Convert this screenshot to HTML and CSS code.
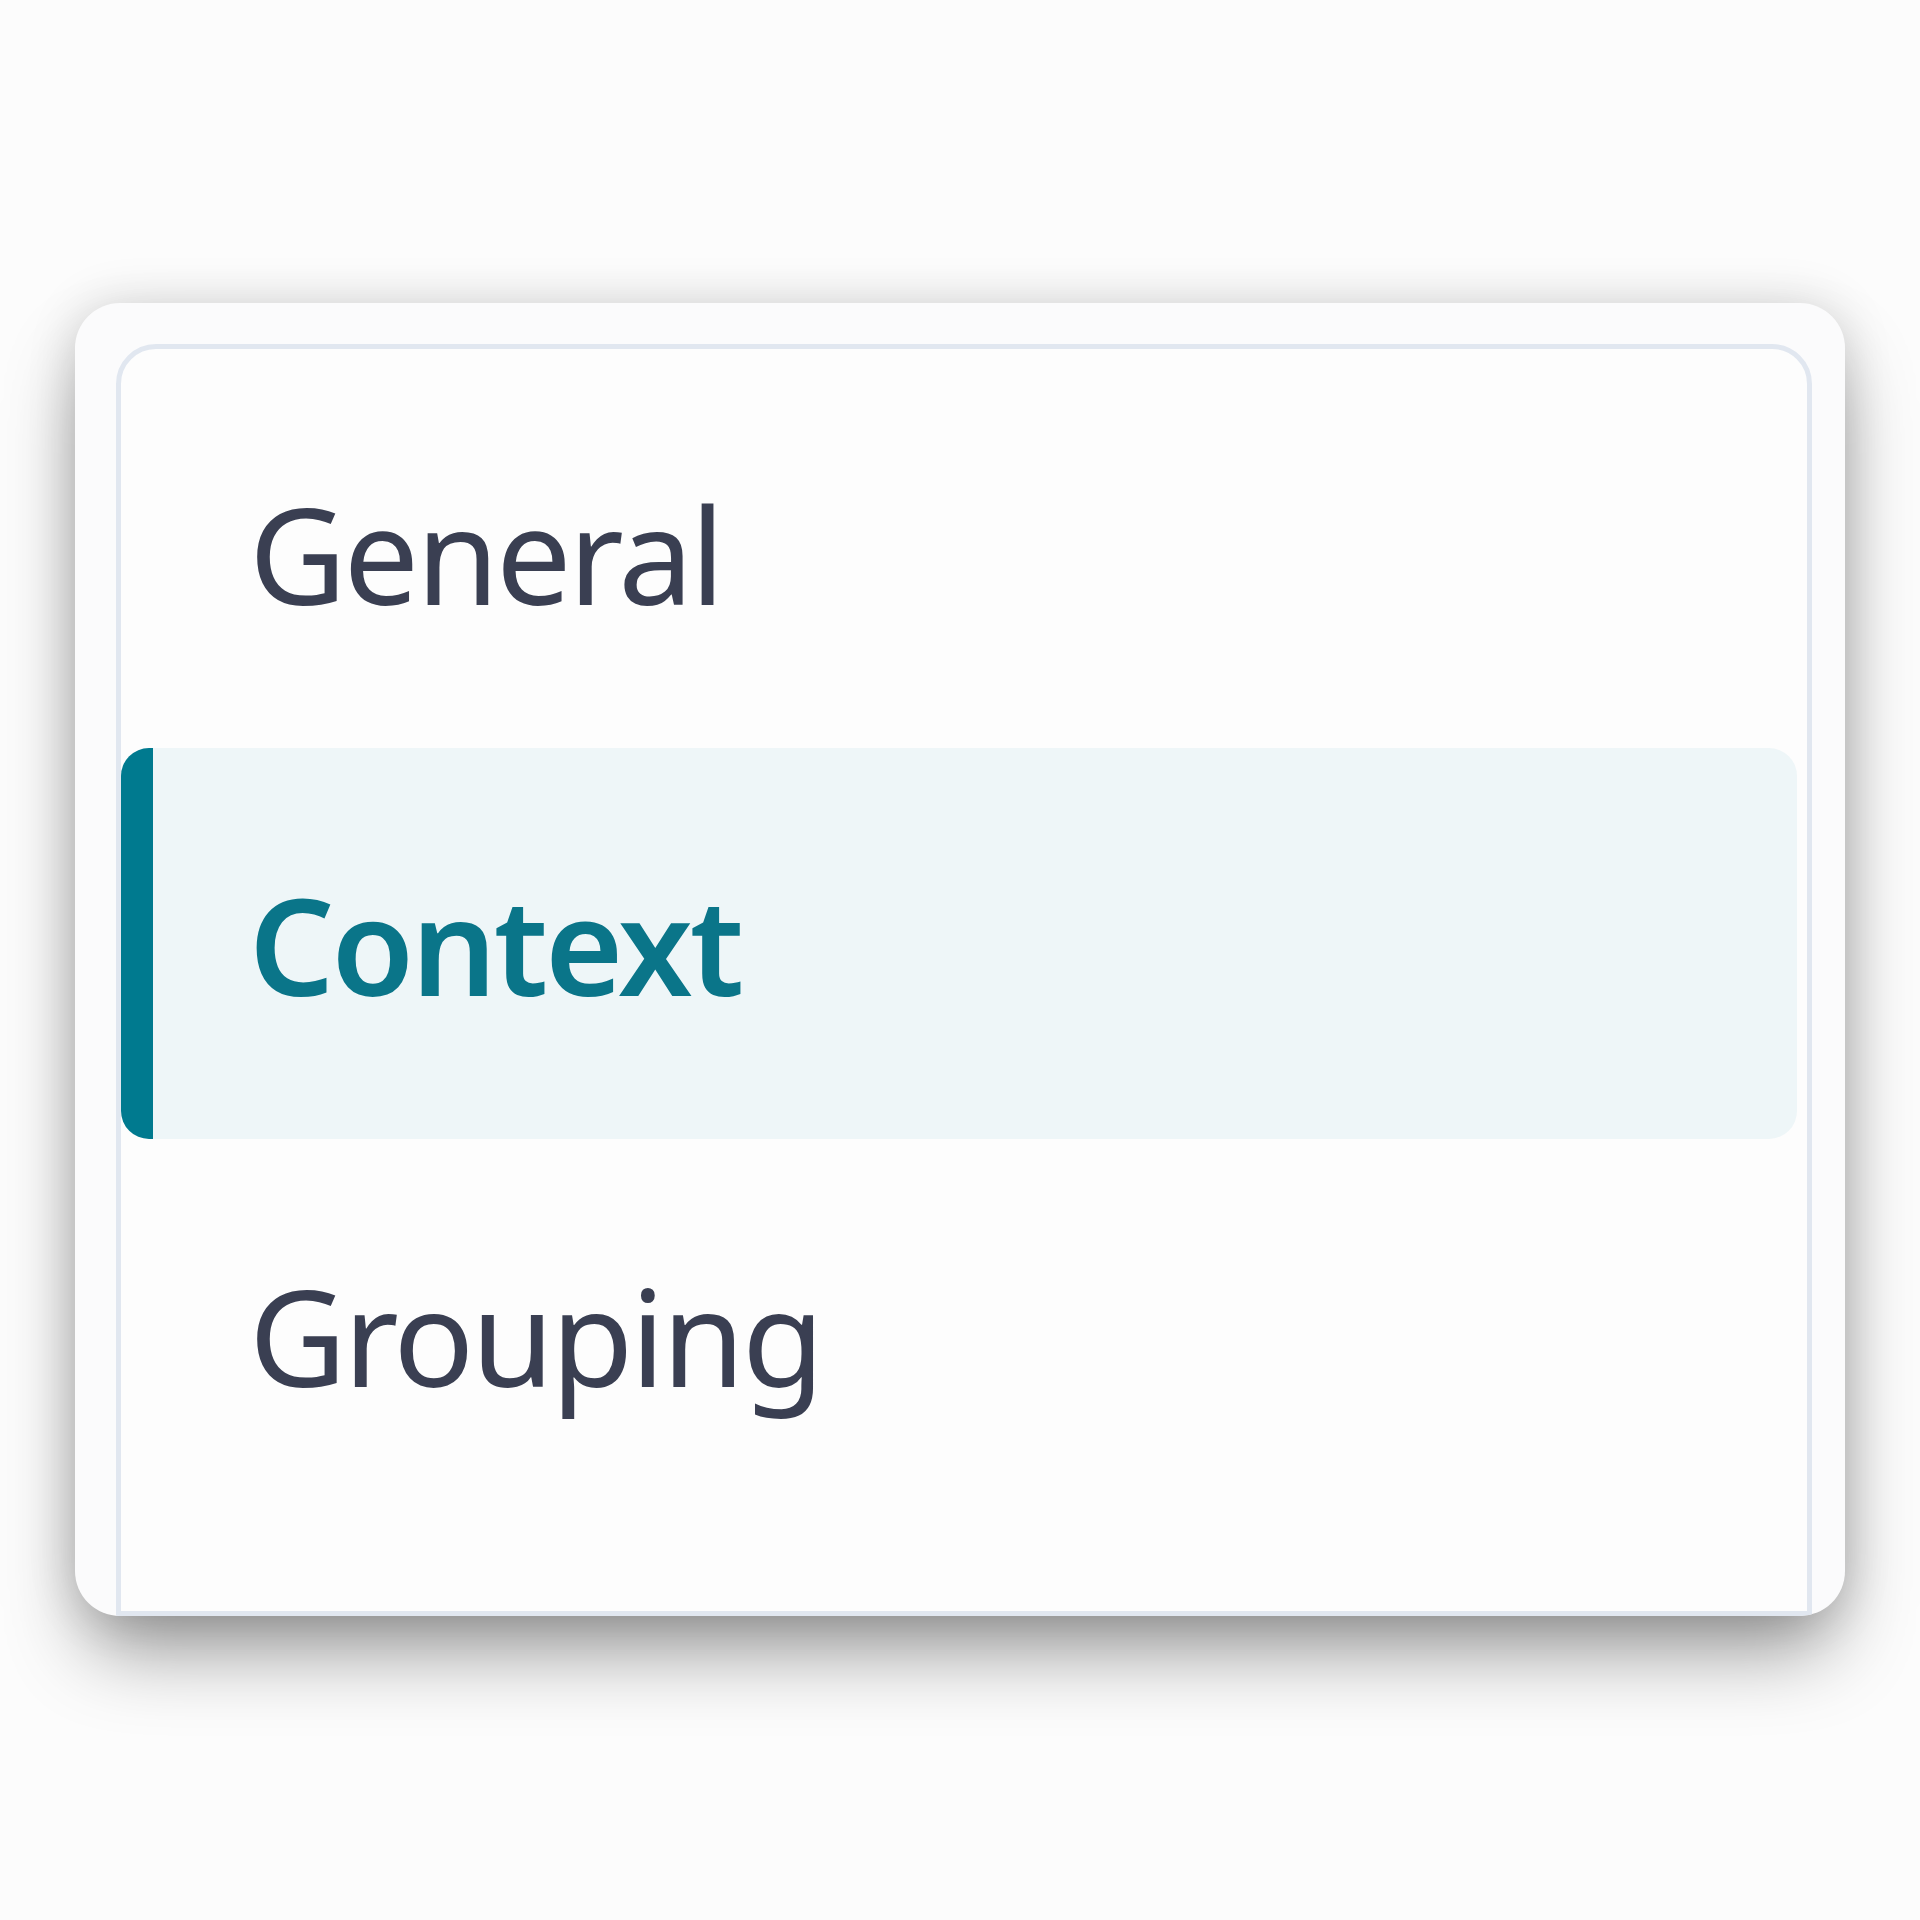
FILE: index.html
```html
<!DOCTYPE html>
<html lang="en">
<head>
<meta charset="utf-8">
<title>Settings navigation</title>
<link rel="stylesheet" href="styles.css">
</head>
<body>
<div class="stage">
  <div class="card">
    <nav class="panel">
      <ul class="nav-list">
        <li class="nav-item">General</li>
        <li class="nav-item is-active">Context</li>
        <li class="nav-item">Grouping</li>
      </ul>
    </nav>
  </div>
</div>
</body>
</html>
```
FILE: styles.css
```css
html, body {
  margin: 0;
  padding: 0;
  background: #fcfcfc;
}

.stage {
  min-height: 1920px;
  box-sizing: border-box;
  padding: 303px 0 0 75px;
}

.card {
  width: 1770px;
  height: 1313px;
  box-sizing: border-box;
  background: #fbfbfc;
  border-radius: 45px;
  box-shadow: 0 44px 80px -12px rgba(0, 0, 0, 0.42), 0 0 50px rgba(0, 0, 0, 0.14);
  overflow: hidden;
  padding: 41px 33px 0 41px;
}

.panel {
  height: 100%;
  box-sizing: border-box;
  background: #fdfdfd;
  border: 5px solid #e1e7f0;
  border-radius: 40px 40px 0 0;
  padding: 8px 10px 0 0;
}

.nav-list {
  list-style: none;
  margin: 0;
  padding: 0;
}

.nav-item {
  display: flex;
  align-items: center;
  height: 391px;
  box-sizing: border-box;
  border-left: 32px solid transparent;
  border-radius: 28px;
  padding-left: 96px;
  font-family: "Noto Sans", "Open Sans", sans-serif;
  font-size: 134px;
  font-weight: 400;
  color: #3a3f52;
  letter-spacing: -3px;
}

.nav-item.is-active {
  background: #eef6f8;
  border-left-color: #007a8f;
  color: #0a7589;
  font-weight: 600;
}
```
